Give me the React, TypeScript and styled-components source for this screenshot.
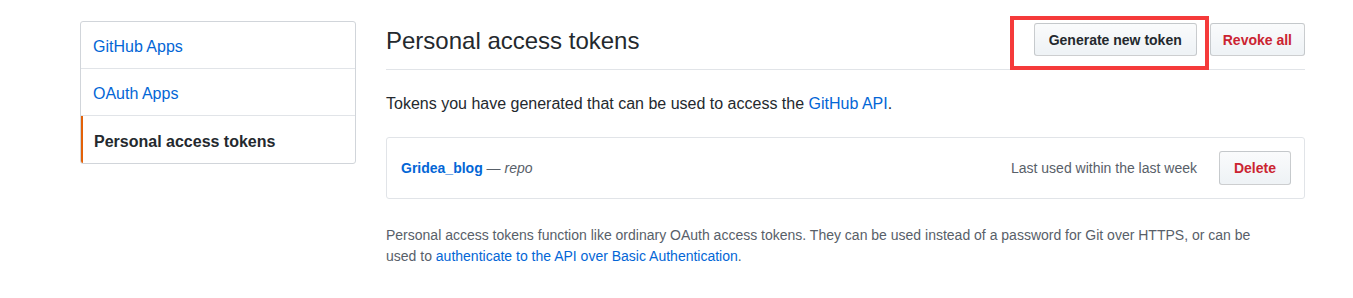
import styled, { createGlobalStyle } from "styled-components";

const GlobalStyle = createGlobalStyle`
  body {
    margin: 0;
    background: #fff;
    font-family: "Liberation Sans", Arial, sans-serif;
    color: #24292e;
  }
`;

const sideItems = [
  { label: "GitHub Apps", selected: false },
  { label: "OAuth Apps", selected: false },
  { label: "Personal access tokens", selected: true },
];

const App = () => {
  return (
    <>
      <GlobalStyle />
      <Page>
        <SideNav>
          {sideItems.map((item) => (
            <NavItem key={item.label} $selected={item.selected}>
              {item.label}
            </NavItem>
          ))}
        </SideNav>
        <Main>
          <Header>
            <Title>Personal access tokens</Title>
            <Actions>
              <Highlighted>
                <Button>Generate new token</Button>
                <RedFrame />
              </Highlighted>
              <Button $danger $narrow>
                Revoke all
              </Button>
            </Actions>
          </Header>
          <Intro>
            Tokens you have generated that can be used to access the{" "}
            <A>GitHub API</A>.
          </Intro>
          <TokenBox>
            <TokenName>Gridea_blog</TokenName>
            <Scope>
              {" "}
              — <em>repo</em>
            </Scope>
            <LastUsed>Last used within the last week</LastUsed>
            <Button $danger $small>
              Delete
            </Button>
          </TokenBox>
          <Note>
            Personal access tokens function like ordinary OAuth access tokens.
            They can be used instead of a password for Git over HTTPS, or can be
            used to <A>authenticate to the API over Basic Authentication</A>.
          </Note>
        </Main>
      </Page>
    </>
  );
};

export default App;

const Page = styled.div`
  display: flex;
  gap: 30px;
  padding: 21px 0 0 80px;
  width: 1305px;
  box-sizing: border-box;
`;

const SideNav = styled.nav`
  width: 276px;
  flex-shrink: 0;
  box-sizing: border-box;
  border: 1px solid #d1d5da;
  border-radius: 3px;
  align-self: flex-start;
  overflow: hidden;
`;

const NavItem = styled.div<{ $selected: boolean }>`
  height: 47px;
  box-sizing: border-box;
  display: flex;
  align-items: center;
  padding-top: 4px;
  padding-left: ${(p) => (p.$selected ? "11px" : "12px")};
  font-size: 16px;
  color: ${(p) => (p.$selected ? "#24292e" : "#0366d6")};
  font-weight: ${(p) => (p.$selected ? 600 : 400)};
  border-left: ${(p) => (p.$selected ? "2px solid #e36209" : "none")};
  border-bottom: 1px solid #e1e4e8;

  &:last-child {
    border-bottom: none;
  }
`;

const Main = styled.div`
  flex: 1;
  min-width: 0;
`;

const Header = styled.div`
  display: flex;
  align-items: center;
  justify-content: space-between;
  height: 48px;
  border-bottom: 1px solid #e1e4e8;
`;

const Title = styled.h2`
  margin: 0 0 8px;
  font-size: 24px;
  font-weight: 400;
  color: #24292e;
`;

const Actions = styled.div`
  display: flex;
  align-items: center;
  gap: 13px;
  margin-bottom: 11px;
`;

const Highlighted = styled.div`
  position: relative;
`;

const RedFrame = styled.div`
  position: absolute;
  left: -24px;
  right: -12px;
  top: -7px;
  bottom: -14px;
  border: 4px solid #f53a3a;
  pointer-events: none;
`;

const Button = styled.button<{
  $danger?: boolean;
  $small?: boolean;
  $narrow?: boolean;
}>`
  font-family: inherit;
  font-size: 14px;
  font-weight: 600;
  line-height: 20px;
  padding: ${(p) => (p.$narrow ? "6px 12px" : "6px 14px")};
  height: ${(p) => (p.$small ? "34px" : "33px")};
  color: ${(p) => (p.$danger ? "#cb2431" : "#24292e")};
  background: linear-gradient(-180deg, #fafbfc 0%, #eff3f6 90%);
  border: 1px solid rgba(27, 31, 35, 0.2);
  border-radius: 3px;
  cursor: pointer;
`;

const Intro = styled.p`
  margin: 22px 0 21px;
  font-size: 16px;
  line-height: 24px;
`;

const A = styled.a`
  color: #0366d6;
  text-decoration: none;
`;

const TokenBox = styled.div`
  display: flex;
  align-items: center;
  height: 62px;
  box-sizing: border-box;
  padding: 0 13px 0 14px;
  border: 1px solid #e1e4e8;
  border-radius: 3px;
  font-size: 14px;
`;

const TokenName = styled.strong`
  color: #0366d6;
`;

const Scope = styled.span`
  white-space: pre;
  color: #586069;
  flex: 1;
`;

const LastUsed = styled.span`
  color: #586069;
  margin-right: 22px;
`;

const Note = styled.p`
  margin: 26px 0 0;
  padding-right: 40px;
  font-size: 14px;
  line-height: 21px;
  color: #586069;
`;
